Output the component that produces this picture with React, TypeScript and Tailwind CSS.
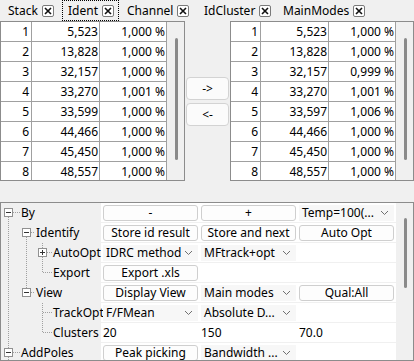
import React from "react";

type Row = [string, string, string];

const leftRows: Row[] = [
  ["1", "5,523", "1,000 %"],
  ["2", "13,828", "1,000 %"],
  ["3", "32,157", "1,000 %"],
  ["4", "33,270", "1,001 %"],
  ["5", "33,599", "1,000 %"],
  ["6", "44,466", "1,000 %"],
  ["7", "45,450", "1,000 %"],
  ["8", "48,557", "1,000 %"],
];

const rightRows: Row[] = [
  ["1", "5,523", "1,000 %"],
  ["2", "13,828", "1,000 %"],
  ["3", "32,157", "0,999 %"],
  ["4", "33,270", "1,001 %"],
  ["5", "33,597", "1,006 %"],
  ["6", "44,466", "1,000 %"],
  ["7", "45,450", "1,000 %"],
  ["8", "48,557", "1,000 %"],
];

function CloseBox() {
  return (
    <svg width="12" height="12" viewBox="0 0 12 12" className="shrink-0">
      <rect x="0.5" y="0.5" width="11" height="11" rx="1.5" fill="#fff" stroke="#7a7a7a" />
      <path d="M3 3 L9 9 M9 3 L3 9" stroke="#111" strokeWidth="1.6" />
    </svg>
  );
}

function Tab({ label, className }: { label: string; className: string }) {
  return (
    <div className={`flex items-center gap-[4px] h-[21px] ${className}`}>
      <span>{label}</span>
      <CloseBox />
    </div>
  );
}

function DataTable({ rows, first }: { rows: Row[]; first: string }) {
  return (
    <div className="flex h-[160px] border border-[#8c8c8c] overflow-hidden">
      <div className="flex flex-col bg-white">
        {rows.map((r) => (
          <div key={r[0]} className="flex h-[20px] shrink-0 border-b border-[#a0a0a0]">
            <div className={`${first} border-r border-[#a0a0a0] text-right pr-[2px] leading-[19px]`}>{r[0]}</div>
            <div className="w-[68px] border-r border-[#a0a0a0] text-right pr-[1px] leading-[19px]">{r[1]}</div>
            <div className="w-[67px] border-r border-[#a0a0a0] text-right pr-[1px] leading-[19px]">{r[2]}</div>
          </div>
        ))}
      </div>
      <div className="w-[17px] bg-[#f0f0f0] pt-[16px] pl-[8px]">
        <div className="w-[3px] h-[122px] rounded-full bg-[#8a8a8a]" />
      </div>
    </div>
  );
}

function Btn({ children }: { children: React.ReactNode }) {
  return (
    <div className="ml-[2px] w-[95px] h-[16px] rounded-[3px] border border-[#cfcfcf] bg-[#fdfdfd] text-center leading-[14px]">
      {children}
    </div>
  );
}

function Chevron() {
  return (
    <svg width="9" height="6" viewBox="0 0 9 6">
      <path d="M1 1 L4.5 4.5 L8 1" fill="none" stroke="#707070" strokeWidth="1" />
    </svg>
  );
}

function Combo({ children }: { children: React.ReactNode }) {
  return (
    <div className="ml-[2px] w-[95px] h-[16px] flex items-center justify-between pl-[3px] pr-[5px] bg-[#f7f7f7]">
      <span className="leading-[16px]">{children}</span>
      <Chevron />
    </div>
  );
}

function Plain({ children }: { children: React.ReactNode }) {
  return <div className="pl-[2px] leading-[16px]">{children}</div>;
}

// dotted guide pixels
function vDots(x: number, y1: number, y2: number) {
  const out: React.ReactNode[] = [];
  for (let y = y1; y < y2; y++) if (y % 2 === 0) out.push(<rect key={`v${x}-${y}`} x={x} y={y} width="1" height="1" />);
  return out;
}
function hDots(x1: number, x2: number, y: number) {
  const out: React.ReactNode[] = [];
  for (let x = x1; x <= x2; x++) if (x % 2 === 0) out.push(<rect key={`h${x}-${y}`} x={x} y={y} width="1" height="1" />);
  return out;
}
function Box({ x, plus }: { x: number; plus?: boolean }) {
  return (
    <g>
      <rect x={x + 0.5} y={5.5} width="8" height="8" fill="#fff" stroke="#919191" />
      <rect x={x + 2} y={9} width="5" height="1" fill="#333" />
      {plus && <rect x={x + 4} y={7} width="1" height="5" fill="#333" />}
    </g>
  );
}

type TreeRow = {
  text: string;
  w: number;
  dots: React.ReactNode[];
  box?: React.ReactNode;
  cells: React.ReactNode[];
};

const treeRows: TreeRow[] = [
  {
    text: "By",
    w: 19,
    dots: [...vDots(7, 14, 20), ...hDots(12, 18, 9)],
    box: <Box x={3} />,
    cells: [<Btn>-</Btn>, <Btn>+</Btn>, <Combo>Temp=100(...</Combo>],
  },
  {
    text: "Identify",
    w: 34,
    dots: [...vDots(7, 0, 20), ...vDots(25, 14, 20), ...hDots(30, 33, 9)],
    box: <Box x={21} />,
    cells: [<Btn>Store id result</Btn>, <Btn>Store and next</Btn>, <Btn>Auto Opt</Btn>],
  },
  {
    text: "AutoOpt",
    w: 51,
    dots: [...vDots(7, 0, 20), ...vDots(25, 0, 20), ...vDots(41, 0, 5), ...vDots(41, 14, 20), ...hDots(46, 50, 9)],
    box: <Box x={37} plus />,
    cells: [<Combo>IDRC method</Combo>, <Combo>MFtrack+opt</Combo>],
  },
  {
    text: "Export",
    w: 51,
    dots: [...vDots(7, 0, 20), ...vDots(25, 0, 20), ...vDots(41, 0, 10), ...hDots(42, 50, 9)],
    cells: [<Btn>Export .xls</Btn>],
  },
  {
    text: "View",
    w: 34,
    dots: [...vDots(7, 0, 20), ...vDots(25, 0, 5), ...hDots(30, 33, 9)],
    box: <Box x={21} />,
    cells: [<Btn>Display View</Btn>, <Combo>Main modes</Combo>, <Btn>Qual:All</Btn>],
  },
  {
    text: "TrackOpt",
    w: 51,
    dots: [...vDots(7, 0, 20), ...vDots(41, 0, 20), ...hDots(42, 50, 9)],
    cells: [<Combo>F/FMean</Combo>, <Combo>Absolute D...</Combo>],
  },
  {
    text: "Clusters",
    w: 51,
    dots: [...vDots(7, 0, 20), ...vDots(41, 0, 10), ...hDots(42, 50, 9)],
    cells: [<Plain>20</Plain>, <Plain>150</Plain>, <Plain>70.0</Plain>],
  },
  {
    text: "AddPoles",
    w: 19,
    dots: [...vDots(7, 0, 5), ...vDots(7, 14, 20), ...hDots(12, 18, 9)],
    box: <Box x={3} />,
    cells: [<Btn>Peak picking</Btn>, <Combo>Bandwidth ...</Combo>],
  },
];

export default function App() {
  return (
    <div className="w-[414px] h-[361px] overflow-hidden bg-[#f0f0f0] text-[12px] text-black font-['Segoe_UI','Noto_Sans',sans-serif]">
      {/* tab strip */}
      <div className="flex h-[21px]">
        <Tab label="Stack" className="w-[62px] pl-[8px]" />
        <Tab label="Ident" className="w-[57px] pl-[5px] border border-dotted border-black" />
        <Tab label="Channel" className="w-[78px] pl-[8px]" />
        <Tab label="IdCluster" className="w-[79px] pl-[7px]" />
        <Tab label="MainModes" className="pl-[7px]" />
      </div>

      {/* tables */}
      <div className="flex">
        <div className="w-[185px]">
          <DataTable rows={leftRows} first="w-[31px]" />
        </div>
        <div className="w-[45px] flex flex-col gap-[3px] pt-[56px] pl-[1px]">
          <div className="w-[43px] h-[23px] rounded-[4px] border border-[#d3d3d3] bg-[#fbfbfb] text-center leading-[21px]">-&gt;</div>
          <div className="w-[43px] h-[23px] rounded-[4px] border border-[#d3d3d3] bg-[#fbfbfb] text-center leading-[21px]">&lt;-</div>
        </div>
        <div className="w-[184px]">
          <DataTable rows={rightRows} first="w-[30px]" />
        </div>
      </div>

      {/* property grid */}
      <div className="mt-[21px] flex h-[159px] border border-[#8c8c8c] bg-white overflow-hidden">
        <div className="w-[395px] flex flex-col">
          {treeRows.map((r) => (
            <div key={r.text} className="flex h-[20px] shrink-0 border-b border-[#f0f0f0]">
              <div className="w-[100px] flex items-center bg-[#f0f0f0]">
                <svg width={r.w} height="20" className="shrink-0" fill="#a0a0a0">
                  {r.dots}
                  {r.box}
                </svg>
                <span className="pl-[1px] leading-[19px]">{r.text}</span>
              </div>
              {r.cells.map((c, i) => (
                <div key={i} className="w-[98px] flex items-center">
                  {c}
                </div>
              ))}
            </div>
          ))}
        </div>
        <div className="w-[17px] bg-[#f0f0f0] pt-[15px] pl-[8px]">
          <div className="w-[3px] h-[70px] rounded-full bg-[#8a8a8a]" />
        </div>
      </div>
    </div>
  );
}
